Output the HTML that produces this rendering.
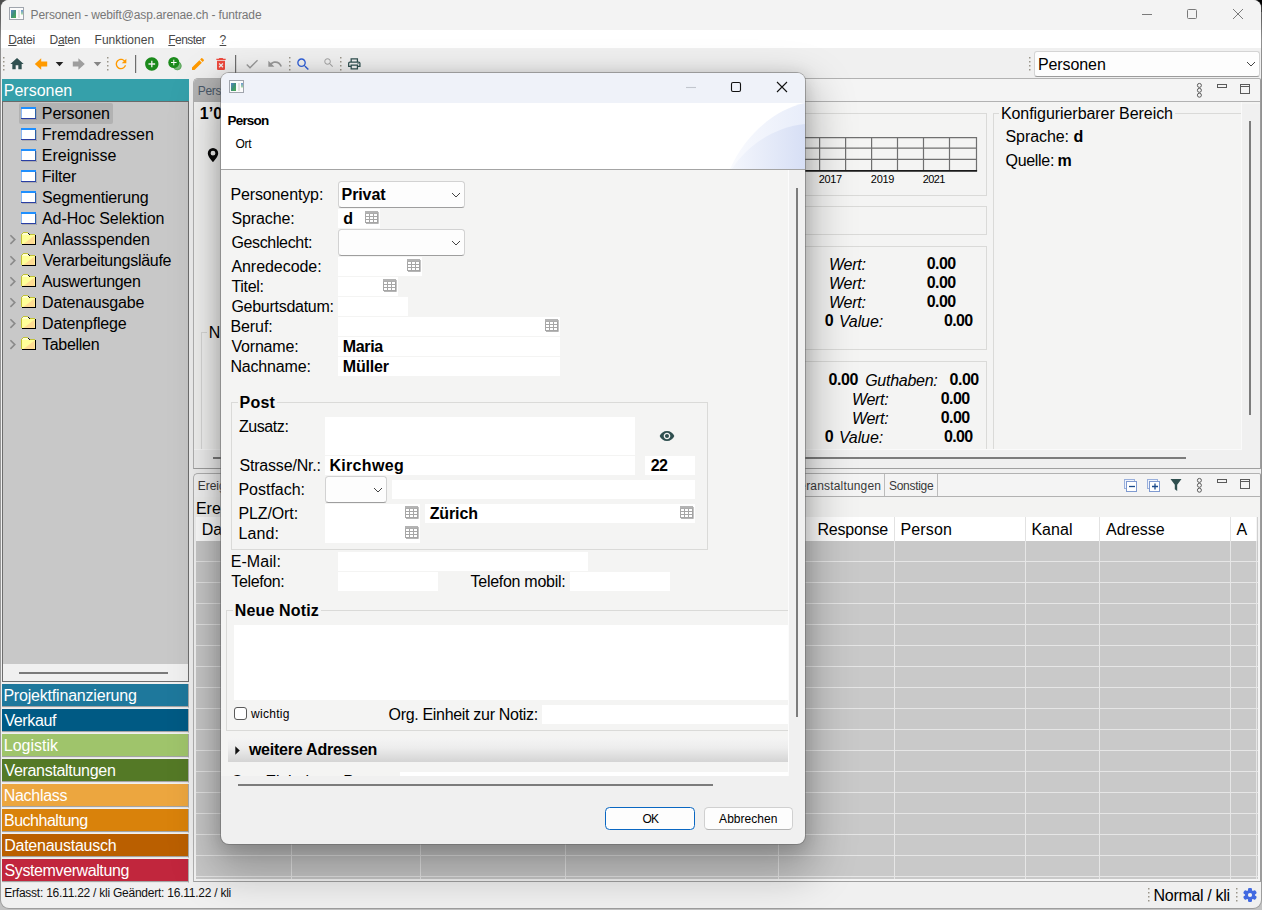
<!DOCTYPE html>
<html lang="de"><head><meta charset="utf-8"><title>Personen - webift@asp.arenae.ch - funtrade</title>
<style>
*{box-sizing:border-box;margin:0;padding:0}
html,body{width:1262px;height:910px;overflow:hidden}
body{position:relative;background:linear-gradient(#4e4e4e 0,#4e4e4e 18px,#a8a8a8 40px,#c2c2c2 100%);font-family:"Liberation Sans",Arial,sans-serif;color:#000;font-size:16px}
.abs{position:absolute}
.t{position:absolute;white-space:pre;line-height:1}
u{text-decoration:underline;text-underline-offset:1px;text-decoration-thickness:1px}
.field{position:absolute;background:#fff}
</style></head><body>
<div class="abs" style="left:1250px;top:0;width:12px;height:12px;background:#000"></div>
<div class="abs" id="win" style="left:1px;top:0;width:1260px;height:908px;background:#f0f0f0;border-radius:8px;overflow:hidden;box-shadow:0 0 0 1px rgba(120,120,120,.5)"></div>
<div class="abs" style="left:1px;top:0px;width:1260px;height:30px;background:#f3f3f3;border-radius:8px 8px 0 0"></div>
<svg class="abs" style="left:9px;top:7px" width="15" height="13" viewBox="0 0 15 13"><defs><linearGradient id="ig" x1="0" y1="0" x2="1" y2="1"><stop offset="0" stop-color="#5a84c8"/><stop offset=".5" stop-color="#3f9078"/><stop offset="1" stop-color="#4cae50"/></linearGradient><linearGradient id="ig2" x1="0" y1="0" x2="0" y2="1"><stop offset="0" stop-color="#6a96d4"/><stop offset="1" stop-color="#a8dca0"/></linearGradient></defs><rect x="0.500" y="0.500" width="14" height="12" fill="#fbfbfb" stroke="#a0a5ad"/><rect x="2" y="3" width="5" height="8" fill="url(#ig)"/><rect x="9" y="3" width="2" height="8" fill="#e2e2e2"/><rect x="12" y="3" width="2" height="4.500" fill="url(#ig2)"/></svg>
<div class="t" style="left:30.60px;top:9.09px;font-size:12px;letter-spacing:-0.130px;color:#777;">Personen - webift@asp.arenae.ch - funtrade</div>
<svg class="abs" style="left:1138px;top:5px" width="110" height="20" viewBox="0 0 110 20" fill="none" stroke="#7a7a7a" stroke-width="1"><path d="M4 9.500h10"/><rect x="49.500" y="4.500" width="9" height="9" rx="1"/><path d="M95 4l10 10M105 4l-10 10"/></svg>
<div class="abs" style="left:1px;top:30px;width:1260px;height:18px;background:#fff;"></div>
<div class="t" style="left:8.20px;top:34.09px;font-size:12px;letter-spacing:-0.262px;color:#484848;"><u>D</u>atei</div>
<div class="t" style="left:49.60px;top:34.09px;font-size:12px;letter-spacing:-0.312px;color:#484848;">D<u>a</u>ten</div>
<div class="t" style="left:94.60px;top:34.09px;font-size:12px;letter-spacing:0.011px;color:#484848;">Funktionen</div>
<div class="t" style="left:168.30px;top:34.09px;font-size:12px;letter-spacing:-0.548px;color:#484848;"><u>F</u>enster</div>
<div class="t" style="left:219.60px;top:34.09px;font-size:12px;color:#484848;"><u>?</u></div>
<svg width="0" height="0" style="position:absolute"><defs><g id="grip" fill="#9a958a"><rect x="0" y="0" width="1.500" height="1.500"/><rect x="0" y="4" width="1.500" height="1.500"/><rect x="0" y="8" width="1.500" height="1.500"/><rect x="0" y="12" width="1.500" height="1.500"/></g><g id="tbl"><rect x="0" y="0" width="13" height="12" fill="#a6a6a6"/><rect x="0" y="0" width="13" height="2.500" fill="#b4b4b4"/><path d="M1 3h3v2h-3zM5 3h3v2h-3zM9 3h3v2h-3zM1 6h3v2h-3zM5 6h3v2h-3zM9 6h3v2h-3zM1 9h3v2h-3zM5 9h3v2h-3zM9 9h3v2h-3z" fill="#fff"/><path d="M13.300 1v11.500H1" stroke="#8a8a8a" stroke-width=".8" fill="none" opacity=".8"/></g></defs></svg>
<svg class="abs" style="left:0;top:49px" width="380" height="30" viewBox="0 49 380 30">
  <g transform="translate(9,56) scale(.667)" fill="#2f4f4f"><path d="M10 20v-6h4v6h5v-8h3L12 3 2 12h3v8z"/></g>
  <path d="M34.800 64l6.400-5.800v3.300h6v5h-6v3.300z" fill="#ff9a00"/>
  <path d="M55.700 62h7.600l-3.800 4.200z" fill="#222"/>
  <path d="M84.800 64l-6.400-5.800v3.300h-5.600v5h5.600v3.300z" fill="#9e9e9e"/>
  <path d="M93.700 62h7.600l-3.800 4.200z" fill="#858585"/>
  <g transform="translate(113,56) scale(.667)" fill="#ff9a00"><path d="M17.650 6.350C16.200 4.900 14.210 4 12 4c-4.420 0-7.990 3.580-7.990 8s3.570 8 7.990 8c3.730 0 6.840-2.550 7.730-6h-2.080c-.82 2.330-3.040 4-5.650 4-3.310 0-6-2.690-6-6s2.690-6 6-6c1.660 0 3.140.69 4.220 1.780L13 11h7V4l-2.350 2.350z"/></g>
  <rect x="135" y="55" width="1.200" height="18" fill="#6e6e6e"/>
  <g transform="translate(143.800,56) scale(.667)" fill="#1b8a1b"><path d="M12 2C6.480 2 2 6.480 2 12s4.480 10 10 10 10-4.480 10-10S17.520 2 12 2zm5 11h-4v4h-2v-4H7v-2h4V7h2v4h4v2z"/></g>
  <circle cx="177.300" cy="65.900" r="4.300" fill="#7ab87a"/><circle cx="177.300" cy="65.900" r="3.800" fill="none" stroke="#4f9f4f" stroke-width=".7"/>
  <circle cx="173.800" cy="62.500" r="5.500" fill="#1b8a1b"/><path d="M171 62.500h5.600M173.800 59.700v5.600" stroke="#fff" stroke-width="1"/>
  <g transform="translate(190,56) scale(.667)" fill="#ff9a00"><path d="M3 17.250V21h3.750L17.810 9.940l-3.750-3.750L3 17.250zM20.710 7.040c.39-.39.39-1.020 0-1.410l-2.340-2.340c-.39-.39-1.020-.39-1.410 0l-1.830 1.830 3.750 3.750 1.830-1.830z"/></g>
  <g transform="translate(213,56) scale(.667)" fill="#ee4a3e"><path d="M6 19c0 1.100.9 2 2 2h8c1.100 0 2-.9 2-2V7H6v12zm2.460-7.120l1.410-1.410L12 12.590l2.120-2.120 1.410 1.410L13.410 14l2.120 2.120-1.410 1.410L12 15.410l-2.120 2.120-1.410-1.410L10.590 14l-2.130-2.120zM15.500 4l-1-1h-5l-1 1H5v2h14V4z"/></g>
  <rect x="235" y="55" width="1.200" height="18" fill="#6e6e6e"/>
  <g transform="translate(244,56) scale(.667)" fill="#9a9a9a"><path d="M9 16.170L4.830 12l-1.420 1.410L9 19 21 7l-1.410-1.410z"/></g>
  <g transform="translate(267,56) scale(.667)" fill="#9a9a9a"><path d="M12.500 8c-2.650 0-5.050.99-6.900 2.600L2 7v9h9l-3.620-3.620c1.390-1.160 3.160-1.880 5.120-1.880 3.540 0 6.550 2.310 7.600 5.500l2.370-.78C21.080 11.030 17.150 8 12.500 8z"/></g>
  <g transform="translate(295.200,56.300) scale(.667)" fill="#2f5fd8"><path d="M15.500 14h-.79l-.28-.27C15.410 12.590 16 11.110 16 9.500 16 5.910 13.090 3 9.500 3S3 5.910 3 9.500 5.910 16 9.500 16c1.610 0 3.090-.59 4.230-1.570l.27.28v.79l5 4.990L20.490 19l-4.990-5zm-6 0C7.010 14 5 11.990 5 9.500S7.010 5 9.500 5 14 7.010 14 9.500 11.990 14 9.500 14z"/></g>
  <g transform="translate(322.800,56.800) scale(.5)" fill="#a6a6a6"><path d="M15.500 14h-.79l-.28-.27C15.410 12.590 16 11.110 16 9.500 16 5.910 13.090 3 9.500 3S3 5.910 3 9.500 5.910 16 9.500 16c1.610 0 3.090-.59 4.230-1.570l.27.28v.79l5 4.990L20.490 19l-4.990-5zm-6 0C7.010 14 5 11.990 5 9.500S7.010 5 9.500 5 14 7.010 14 9.500 11.990 14 9.500 14z"/></g>
  <g transform="translate(346.800,56.400) scale(.625)" fill="#2f4f4f"><path fill-rule="evenodd" d="M19 8h-1V3H6v5H5c-1.660 0-3 1.340-3 3v6h4v4h12v-4h4v-6c0-1.660-1.340-3-3-3zM8 5h8v3H8V5zm8 14H8v-4h8v4zm2-4v-2H6v2H4v-4c0-.55.45-1 1-1h14c.55 0 1 .45 1 1v4h-2z"/><circle cx="18" cy="11.500" r="1"/></g>
</svg>

<svg class="abs" style="left:3px;top:57px" width="2" height="15"><use href="#grip"/></svg>
<svg class="abs" style="left:107px;top:57px" width="2" height="15"><use href="#grip"/></svg>
<svg class="abs" style="left:289px;top:57px" width="2" height="15"><use href="#grip"/></svg>
<svg class="abs" style="left:340px;top:57px" width="2" height="15"><use href="#grip"/></svg>
<svg class="abs" style="left:1029px;top:57px" width="2" height="15"><use href="#grip"/></svg>
<div class="abs" style="left:1034px;top:51px;width:225.500px;height:25.500px;background:#fdfdfd;border:1px solid #d4d4d4;border-bottom-color:#9c9c9c;border-radius:3px"></div>
<div class="t" style="left:1038.00px;top:56.71px;font-size:16px;letter-spacing:-0.099px;">Personen</div>
<svg class="abs" style="left:1246px;top:61px" width="10" height="7" viewBox="0 0 10 7" fill="none" stroke="#444" stroke-width="1"><path d="M1 1l4 4 4-4"/></svg>
<div class="abs" style="left:2px;top:79px;width:187px;height:23px;background:#35a0aa;border-bottom:1px solid #6a6a6a"></div>
<div class="t" style="left:3.80px;top:82.71px;font-size:16px;letter-spacing:-0.013px;color:#fff;">Personen</div>
<div class="abs" style="left:2px;top:102px;width:187px;height:580px;background:#c8c8c8;border:1px solid #6e6e6e;border-top:0"></div>
<div class="abs" style="left:3px;top:664px;width:185px;height:17px;background:#f0f0f0;"></div>
<div class="abs" style="left:19px;top:672px;width:149px;height:2px;background:#7a7a7a;"></div>
<div class="abs" style="left:19px;top:103px;width:94px;height:21px;background:#b2b2b2;border-radius:2px"></div>
<svg class="abs" style="left:21px;top:107px" width="16" height="13" viewBox="0 0 16 13" shape-rendering="crispEdges"><rect x="15" y="2" width="1" height="11" fill="#8a8a96" opacity=".45"/><rect x="1" y="12" width="15" height="1" fill="#8a8a96" opacity=".45"/><rect x="0" y="0" width="15" height="12" fill="#fff"/><rect x="0" y="0" width="15" height="2" fill="#1e8fff"/><rect x="0" y="2" width="1" height="10" fill="#8ab8f4"/><rect x="14" y="2" width="1" height="10" fill="#2a62a8"/><rect x="0" y="11" width="15" height="1" fill="#2a3fa4"/></svg>
<div class="t" style="left:41.80px;top:105.71px;font-size:16px;letter-spacing:-0.056px;">Personen</div>
<svg class="abs" style="left:21px;top:128px" width="16" height="13" viewBox="0 0 16 13" shape-rendering="crispEdges"><rect x="15" y="2" width="1" height="11" fill="#8a8a96" opacity=".45"/><rect x="1" y="12" width="15" height="1" fill="#8a8a96" opacity=".45"/><rect x="0" y="0" width="15" height="12" fill="#fff"/><rect x="0" y="0" width="15" height="2" fill="#1e8fff"/><rect x="0" y="2" width="1" height="10" fill="#8ab8f4"/><rect x="14" y="2" width="1" height="10" fill="#2a62a8"/><rect x="0" y="11" width="15" height="1" fill="#2a3fa4"/></svg>
<div class="t" style="left:41.80px;top:126.71px;font-size:16px;letter-spacing:-0.004px;">Fremdadressen</div>
<svg class="abs" style="left:21px;top:149px" width="16" height="13" viewBox="0 0 16 13" shape-rendering="crispEdges"><rect x="15" y="2" width="1" height="11" fill="#8a8a96" opacity=".45"/><rect x="1" y="12" width="15" height="1" fill="#8a8a96" opacity=".45"/><rect x="0" y="0" width="15" height="12" fill="#fff"/><rect x="0" y="0" width="15" height="2" fill="#1e8fff"/><rect x="0" y="2" width="1" height="10" fill="#8ab8f4"/><rect x="14" y="2" width="1" height="10" fill="#2a62a8"/><rect x="0" y="11" width="15" height="1" fill="#2a3fa4"/></svg>
<div class="t" style="left:41.80px;top:147.71px;font-size:16px;letter-spacing:-0.012px;">Ereignisse</div>
<svg class="abs" style="left:21px;top:170px" width="16" height="13" viewBox="0 0 16 13" shape-rendering="crispEdges"><rect x="15" y="2" width="1" height="11" fill="#8a8a96" opacity=".45"/><rect x="1" y="12" width="15" height="1" fill="#8a8a96" opacity=".45"/><rect x="0" y="0" width="15" height="12" fill="#fff"/><rect x="0" y="0" width="15" height="2" fill="#1e8fff"/><rect x="0" y="2" width="1" height="10" fill="#8ab8f4"/><rect x="14" y="2" width="1" height="10" fill="#2a62a8"/><rect x="0" y="11" width="15" height="1" fill="#2a3fa4"/></svg>
<div class="t" style="left:41.80px;top:168.71px;font-size:16px;letter-spacing:-0.225px;">Filter</div>
<svg class="abs" style="left:21px;top:191px" width="16" height="13" viewBox="0 0 16 13" shape-rendering="crispEdges"><rect x="15" y="2" width="1" height="11" fill="#8a8a96" opacity=".45"/><rect x="1" y="12" width="15" height="1" fill="#8a8a96" opacity=".45"/><rect x="0" y="0" width="15" height="12" fill="#fff"/><rect x="0" y="0" width="15" height="2" fill="#1e8fff"/><rect x="0" y="2" width="1" height="10" fill="#8ab8f4"/><rect x="14" y="2" width="1" height="10" fill="#2a62a8"/><rect x="0" y="11" width="15" height="1" fill="#2a3fa4"/></svg>
<div class="t" style="left:42.00px;top:189.71px;font-size:16px;letter-spacing:-0.160px;">Segmentierung</div>
<svg class="abs" style="left:21px;top:212px" width="16" height="13" viewBox="0 0 16 13" shape-rendering="crispEdges"><rect x="15" y="2" width="1" height="11" fill="#8a8a96" opacity=".45"/><rect x="1" y="12" width="15" height="1" fill="#8a8a96" opacity=".45"/><rect x="0" y="0" width="15" height="12" fill="#fff"/><rect x="0" y="0" width="15" height="2" fill="#1e8fff"/><rect x="0" y="2" width="1" height="10" fill="#8ab8f4"/><rect x="14" y="2" width="1" height="10" fill="#2a62a8"/><rect x="0" y="11" width="15" height="1" fill="#2a3fa4"/></svg>
<div class="t" style="left:42.00px;top:210.71px;font-size:16px;letter-spacing:-0.081px;">Ad-Hoc Selektion</div>
<svg class="abs" style="left:9px;top:234px" width="8" height="11" viewBox="0 0 8 11" fill="none" stroke="#8a8a8a" stroke-width="1.600"><path d="M1.400 1.300l4.400 4.300-4.400 4.300"/></svg>
<svg class="abs" style="left:21px;top:232px" width="16" height="14" viewBox="0 0 16 14" shape-rendering="crispEdges"><rect x="1" y="3" width="13" height="9" fill="#ffff99"/><path d="M13.500 3.500v8.500h-11z" fill="#ffc490" opacity=".6" shape-rendering="auto"/><rect x="2" y="0" width="5" height="1" fill="#c2c238"/><rect x="1" y="1" width="1" height="1" fill="#c2c238"/><rect x="2" y="1" width="5" height="1" fill="#ffffd6"/><rect x="7" y="1" width="1" height="1" fill="#111"/><rect x="0" y="2" width="1" height="10" fill="#c2c238"/><rect x="1" y="2" width="7" height="1" fill="#ffffcc"/><rect x="8" y="2" width="1" height="1" fill="#111"/><rect x="9" y="2" width="5" height="1" fill="#c2c238"/><rect x="14" y="3" width="1" height="10" fill="#000"/><rect x="1" y="12" width="14" height="1" fill="#000"/></svg>
<div class="t" style="left:42.00px;top:231.71px;font-size:16px;letter-spacing:-0.126px;">Anlassspenden</div>
<svg class="abs" style="left:9px;top:255px" width="8" height="11" viewBox="0 0 8 11" fill="none" stroke="#8a8a8a" stroke-width="1.600"><path d="M1.400 1.300l4.400 4.300-4.400 4.300"/></svg>
<svg class="abs" style="left:21px;top:253px" width="16" height="14" viewBox="0 0 16 14" shape-rendering="crispEdges"><rect x="1" y="3" width="13" height="9" fill="#ffff99"/><path d="M13.500 3.500v8.500h-11z" fill="#ffc490" opacity=".6" shape-rendering="auto"/><rect x="2" y="0" width="5" height="1" fill="#c2c238"/><rect x="1" y="1" width="1" height="1" fill="#c2c238"/><rect x="2" y="1" width="5" height="1" fill="#ffffd6"/><rect x="7" y="1" width="1" height="1" fill="#111"/><rect x="0" y="2" width="1" height="10" fill="#c2c238"/><rect x="1" y="2" width="7" height="1" fill="#ffffcc"/><rect x="8" y="2" width="1" height="1" fill="#111"/><rect x="9" y="2" width="5" height="1" fill="#c2c238"/><rect x="14" y="3" width="1" height="10" fill="#000"/><rect x="1" y="12" width="14" height="1" fill="#000"/></svg>
<div class="t" style="left:42.80px;top:252.71px;font-size:16px;letter-spacing:-0.278px;">Verarbeitungsläufe</div>
<svg class="abs" style="left:9px;top:276px" width="8" height="11" viewBox="0 0 8 11" fill="none" stroke="#8a8a8a" stroke-width="1.600"><path d="M1.400 1.300l4.400 4.300-4.400 4.300"/></svg>
<svg class="abs" style="left:21px;top:274px" width="16" height="14" viewBox="0 0 16 14" shape-rendering="crispEdges"><rect x="1" y="3" width="13" height="9" fill="#ffff99"/><path d="M13.500 3.500v8.500h-11z" fill="#ffc490" opacity=".6" shape-rendering="auto"/><rect x="2" y="0" width="5" height="1" fill="#c2c238"/><rect x="1" y="1" width="1" height="1" fill="#c2c238"/><rect x="2" y="1" width="5" height="1" fill="#ffffd6"/><rect x="7" y="1" width="1" height="1" fill="#111"/><rect x="0" y="2" width="1" height="10" fill="#c2c238"/><rect x="1" y="2" width="7" height="1" fill="#ffffcc"/><rect x="8" y="2" width="1" height="1" fill="#111"/><rect x="9" y="2" width="5" height="1" fill="#c2c238"/><rect x="14" y="3" width="1" height="10" fill="#000"/><rect x="1" y="12" width="14" height="1" fill="#000"/></svg>
<div class="t" style="left:42.00px;top:273.71px;font-size:16px;letter-spacing:-0.317px;">Auswertungen</div>
<svg class="abs" style="left:9px;top:297px" width="8" height="11" viewBox="0 0 8 11" fill="none" stroke="#8a8a8a" stroke-width="1.600"><path d="M1.400 1.300l4.400 4.300-4.400 4.300"/></svg>
<svg class="abs" style="left:21px;top:295px" width="16" height="14" viewBox="0 0 16 14" shape-rendering="crispEdges"><rect x="1" y="3" width="13" height="9" fill="#ffff99"/><path d="M13.500 3.500v8.500h-11z" fill="#ffc490" opacity=".6" shape-rendering="auto"/><rect x="2" y="0" width="5" height="1" fill="#c2c238"/><rect x="1" y="1" width="1" height="1" fill="#c2c238"/><rect x="2" y="1" width="5" height="1" fill="#ffffd6"/><rect x="7" y="1" width="1" height="1" fill="#111"/><rect x="0" y="2" width="1" height="10" fill="#c2c238"/><rect x="1" y="2" width="7" height="1" fill="#ffffcc"/><rect x="8" y="2" width="1" height="1" fill="#111"/><rect x="9" y="2" width="5" height="1" fill="#c2c238"/><rect x="14" y="3" width="1" height="10" fill="#000"/><rect x="1" y="12" width="14" height="1" fill="#000"/></svg>
<div class="t" style="left:42.10px;top:294.71px;font-size:16px;letter-spacing:-0.162px;">Datenausgabe</div>
<svg class="abs" style="left:9px;top:318px" width="8" height="11" viewBox="0 0 8 11" fill="none" stroke="#8a8a8a" stroke-width="1.600"><path d="M1.400 1.300l4.400 4.300-4.400 4.300"/></svg>
<svg class="abs" style="left:21px;top:316px" width="16" height="14" viewBox="0 0 16 14" shape-rendering="crispEdges"><rect x="1" y="3" width="13" height="9" fill="#ffff99"/><path d="M13.500 3.500v8.500h-11z" fill="#ffc490" opacity=".6" shape-rendering="auto"/><rect x="2" y="0" width="5" height="1" fill="#c2c238"/><rect x="1" y="1" width="1" height="1" fill="#c2c238"/><rect x="2" y="1" width="5" height="1" fill="#ffffd6"/><rect x="7" y="1" width="1" height="1" fill="#111"/><rect x="0" y="2" width="1" height="10" fill="#c2c238"/><rect x="1" y="2" width="7" height="1" fill="#ffffcc"/><rect x="8" y="2" width="1" height="1" fill="#111"/><rect x="9" y="2" width="5" height="1" fill="#c2c238"/><rect x="14" y="3" width="1" height="10" fill="#000"/><rect x="1" y="12" width="14" height="1" fill="#000"/></svg>
<div class="t" style="left:42.10px;top:315.71px;font-size:16px;letter-spacing:-0.169px;">Datenpflege</div>
<svg class="abs" style="left:9px;top:339px" width="8" height="11" viewBox="0 0 8 11" fill="none" stroke="#8a8a8a" stroke-width="1.600"><path d="M1.400 1.300l4.400 4.300-4.400 4.300"/></svg>
<svg class="abs" style="left:21px;top:337px" width="16" height="14" viewBox="0 0 16 14" shape-rendering="crispEdges"><rect x="1" y="3" width="13" height="9" fill="#ffff99"/><path d="M13.500 3.500v8.500h-11z" fill="#ffc490" opacity=".6" shape-rendering="auto"/><rect x="2" y="0" width="5" height="1" fill="#c2c238"/><rect x="1" y="1" width="1" height="1" fill="#c2c238"/><rect x="2" y="1" width="5" height="1" fill="#ffffd6"/><rect x="7" y="1" width="1" height="1" fill="#111"/><rect x="0" y="2" width="1" height="10" fill="#c2c238"/><rect x="1" y="2" width="7" height="1" fill="#ffffcc"/><rect x="8" y="2" width="1" height="1" fill="#111"/><rect x="9" y="2" width="5" height="1" fill="#c2c238"/><rect x="14" y="3" width="1" height="10" fill="#000"/><rect x="1" y="12" width="14" height="1" fill="#000"/></svg>
<div class="t" style="left:42.00px;top:336.71px;font-size:16px;letter-spacing:-0.286px;">Tabellen</div>
<div class="abs" style="left:2px;top:684px;width:187px;height:24px;background:#1e789c;border-bottom:1px solid #e6e6e6;border-right:1px solid #aaa;box-shadow:inset 0 -1px 0 #a4a4a4;"></div>
<div class="t" style="left:3.40px;top:687.71px;font-size:16px;letter-spacing:-0.193px;color:#fff;">Projektfinanzierung</div>
<div class="abs" style="left:2px;top:709px;width:187px;height:24px;background:#005a84;border-bottom:1px solid #e6e6e6;border-right:1px solid #aaa;box-shadow:inset 0 -1px 0 #a4a4a4;"></div>
<div class="t" style="left:4.40px;top:712.71px;font-size:16px;letter-spacing:-0.369px;color:#fff;">Verkauf</div>
<div class="abs" style="left:2px;top:734px;width:187px;height:24px;background:#9fc46b;border-bottom:1px solid #e6e6e6;border-right:1px solid #aaa;box-shadow:inset 0 -1px 0 #a4a4a4;"></div>
<div class="t" style="left:3.80px;top:737.71px;font-size:16px;letter-spacing:-0.007px;color:#fff;">Logistik</div>
<div class="abs" style="left:2px;top:759px;width:187px;height:24px;background:#547926;border-bottom:1px solid #e6e6e6;border-right:1px solid #aaa;box-shadow:inset 0 -1px 0 #a4a4a4;"></div>
<div class="t" style="left:4.40px;top:762.71px;font-size:16px;letter-spacing:-0.304px;color:#fff;">Veranstaltungen</div>
<div class="abs" style="left:2px;top:784px;width:187px;height:24px;background:#eca63f;border-bottom:1px solid #e6e6e6;border-right:1px solid #aaa;box-shadow:inset 0 -1px 0 #a4a4a4;"></div>
<div class="t" style="left:3.80px;top:787.71px;font-size:16px;letter-spacing:-0.315px;color:#fff;">Nachlass</div>
<div class="abs" style="left:2px;top:809px;width:187px;height:24px;background:#d9820b;border-bottom:1px solid #e6e6e6;border-right:1px solid #aaa;box-shadow:inset 0 -1px 0 #a4a4a4;"></div>
<div class="t" style="left:4.00px;top:812.71px;font-size:16px;letter-spacing:-0.486px;color:#fff;">Buchhaltung</div>
<div class="abs" style="left:2px;top:834px;width:187px;height:24px;background:#ba5f00;border-bottom:1px solid #e6e6e6;border-right:1px solid #aaa;box-shadow:inset 0 -1px 0 #a4a4a4;"></div>
<div class="t" style="left:4.20px;top:837.71px;font-size:16px;letter-spacing:-0.249px;color:#fff;">Datenaustausch</div>
<div class="abs" style="left:2px;top:859px;width:187px;height:24px;background:#c1263d;border-bottom:1px solid #e6e6e6;border-right:1px solid #aaa;box-shadow:inset 0 -1px 0 #a4a4a4;"></div>
<div class="t" style="left:4.60px;top:862.71px;font-size:16px;letter-spacing:-0.401px;color:#fff;">Systemverwaltung</div>
<div class="abs" style="left:193px;top:78px;width:1068px;height:391px;background:#f4f4f4;border:1px solid #b2b2b2;border-right-color:#9c9c9c;border-bottom-color:#a0a0a0;border-radius:5px 2px 0 0"></div>
<div class="abs" style="left:194px;top:79px;width:42px;height:22px;background:#b4b4b4;border-radius:4px 0 0 0"></div>
<div class="t" style="left:197.80px;top:85.09px;font-size:12px;letter-spacing:-0.300px;color:#4a5a6a;">Perso</div>
<div class="abs" style="left:194px;top:101px;width:1066px;height:1px;background:#b2b2b2;"></div>
<div class="abs" style="left:194px;top:102px;width:1066px;height:2px;background:#f4f4f3;"></div>
<div class="abs" style="left:1241px;top:104px;width:19px;height:345px;background:#f0f0f0;"></div>
<div class="abs" style="left:194px;top:449px;width:1066px;height:19px;background:#f0f0f0;"></div>
<div class="abs" style="left:194px;top:102px;width:1048px;height:348px;background:#fafafa;"></div>
<div class="abs" style="left:194px;top:102px;width:1047px;height:347px;background:#f4f4f3;"></div>
<div class="t" style="left:199.80px;top:105.71px;font-size:16px;font-weight:bold;">1’0</div>
<svg class="abs" style="left:206px;top:147px" width="14" height="16" viewBox="206 147 14 16"><path fill="#0a0a0a" fill-rule="evenodd" d="M213 148a5.200 5.200 0 0 0-5.200 5.200c0 3.600 5.200 8.900 5.200 8.900s5.200-5.300 5.200-8.900A5.200 5.200 0 0 0 213 148zm0 2.800a2.400 2.400 0 1 1 0 4.800a2.400 2.400 0 0 1 0-4.800z"/></svg>
<div class="abs" style="left:201px;top:332px;width:400px;height:117px;border:1px solid #dadad8;border-bottom:0"></div>
<div class="t" style="left:208.80px;top:324.71px;font-size:16px;background:#f4f4f3;padding:0 2px 0 2px;margin-left:-2px;">N</div>
<div class="abs" style="left:560px;top:113px;width:427px;height:83px;border:1px solid #dadad8;"></div>
<div class="abs" style="left:560px;top:206px;width:427px;height:29px;border:1px solid #dadad8;"></div>
<div class="abs" style="left:560px;top:246px;width:427px;height:104px;border:1px solid #dadad8;"></div>
<div class="abs" style="left:560px;top:361px;width:427px;height:88px;border:1px solid #dadad8;border-bottom:0"></div>
<svg class="abs" style="left:780px;top:136px" width="200" height="38" viewBox="0 0 200 38" fill="none" stroke="#707070" stroke-width="1.200"><path d="M0 1.600h197M0 12.200h197M0 23.400h197M13.600 1v34M39.600 1v34M65.600 1v34M91.600 1v34M117.500 1v34M143.500 1v34M169.500 1v34M196.500 1v34"/><path d="M0 34.900h197.100" stroke="#1a1a1a" stroke-width="1.600"/></svg>
<div class="t" style="left:818.70px;top:173.94px;font-size:11px;letter-spacing:-0.351px;">2017</div>
<div class="t" style="left:870.80px;top:173.94px;font-size:11px;letter-spacing:-0.284px;">2019</div>
<div class="t" style="left:922.80px;top:173.94px;font-size:11px;letter-spacing:-0.618px;">2021</div>
<div class="t" style="left:829.00px;top:256.71px;font-size:16px;letter-spacing:-0.246px;font-style:italic;">Wert:</div>
<div class="t" style="left:926.70px;top:255.71px;font-size:16px;letter-spacing:-0.547px;font-weight:bold;">0.00</div>
<div class="t" style="left:829.00px;top:275.71px;font-size:16px;letter-spacing:-0.246px;font-style:italic;">Wert:</div>
<div class="t" style="left:926.70px;top:274.71px;font-size:16px;letter-spacing:-0.547px;font-weight:bold;">0.00</div>
<div class="t" style="left:829.00px;top:294.71px;font-size:16px;letter-spacing:-0.246px;font-style:italic;">Wert:</div>
<div class="t" style="left:926.70px;top:293.71px;font-size:16px;letter-spacing:-0.547px;font-weight:bold;">0.00</div>
<div class="t" style="left:824.80px;top:312.71px;font-size:16px;font-weight:bold;">0</div>
<div class="t" style="left:838.90px;top:313.71px;font-size:16px;letter-spacing:-0.106px;font-style:italic;">Value:</div>
<div class="t" style="left:944.10px;top:312.71px;font-size:16px;letter-spacing:-0.681px;font-weight:bold;">0.00</div>
<div class="t" style="left:828.50px;top:371.71px;font-size:16px;letter-spacing:-0.381px;font-weight:bold;">0.00</div>
<div class="t" style="left:865.20px;top:372.71px;font-size:16px;letter-spacing:-0.273px;font-style:italic;">Guthaben:</div>
<div class="t" style="left:949.50px;top:371.71px;font-size:16px;letter-spacing:-0.481px;font-weight:bold;">0.00</div>
<div class="t" style="left:852.00px;top:391.71px;font-size:16px;letter-spacing:-0.321px;font-style:italic;">Wert:</div>
<div class="t" style="left:940.80px;top:390.71px;font-size:16px;letter-spacing:-0.581px;font-weight:bold;">0.00</div>
<div class="t" style="left:852.00px;top:410.71px;font-size:16px;letter-spacing:-0.321px;font-style:italic;">Wert:</div>
<div class="t" style="left:940.80px;top:409.71px;font-size:16px;letter-spacing:-0.581px;font-weight:bold;">0.00</div>
<div class="t" style="left:824.80px;top:428.71px;font-size:16px;font-weight:bold;">0</div>
<div class="t" style="left:838.90px;top:429.71px;font-size:16px;letter-spacing:-0.106px;font-style:italic;">Value:</div>
<div class="t" style="left:944.10px;top:428.71px;font-size:16px;letter-spacing:-0.681px;font-weight:bold;">0.00</div>
<div class="abs" style="left:993px;top:113px;width:248px;height:336px;border:1px solid #dadad8;border-right:0;border-bottom:0"></div>
<div class="t" style="left:1000.90px;top:105.71px;font-size:16px;letter-spacing:-0.058px;background:#f4f4f3;padding:0 2px;margin-left:-2px;">Konfigurierbarer Bereich</div>
<div class="t" style="left:1005.50px;top:128.71px;font-size:16px;letter-spacing:-0.071px;">Sprache:</div>
<div class="t" style="left:1073.60px;top:128.71px;font-size:16px;font-weight:bold;">d</div>
<div class="t" style="left:1005.50px;top:152.71px;font-size:16px;letter-spacing:-0.308px;">Quelle:</div>
<div class="t" style="left:1057.50px;top:152.71px;font-size:16px;font-weight:bold;">m</div>
<div class="abs" style="left:1249px;top:121px;width:2px;height:294px;background:#7c7c7c;"></div>
<div class="abs" style="left:213px;top:457px;width:973px;height:2px;background:#7c7c7c;"></div>
<svg class="abs" style="left:1194px;top:82px" width="60" height="16" viewBox="0 0 60 16" fill="none" stroke="#5a5a5a" stroke-width="1"><circle cx="5.400" cy="3.400" r="2"/><circle cx="5.400" cy="8.300" r="2"/><circle cx="5.400" cy="13.200" r="2"/><rect x="23.500" y="2.500" width="9" height="3"/><rect x="46.500" y="2.500" width="9" height="9"/><path d="M46.500 4.500h9"/></svg>
<div class="abs" style="left:193px;top:473px;width:1068px;height:409px;background:#f4f4f4;border:1px solid #b2b2b2;border-right-color:#9c9c9c;border-bottom-color:#a0a0a0;border-radius:5px 2px 0 0"></div>
<div class="abs" style="left:230px;top:496px;width:1030px;height:1px;background:#b2b2b2;"></div>
<div class="abs" style="left:194px;top:497px;width:1066px;height:20px;background:#f3f3f2;"></div>
<div class="t" style="left:197.70px;top:480.09px;font-size:12px;color:#3a3a3a;">Ereig</div>
<div class="t" style="left:799.30px;top:480.09px;font-size:12px;letter-spacing:0.175px;color:#3a3a3a;">eranstaltungen</div>
<div class="abs" style="left:884px;top:474px;width:1px;height:22px;background:#bcbcbc;"></div>
<div class="abs" style="left:937px;top:474px;width:1px;height:22px;background:#bcbcbc;"></div>
<div class="t" style="left:889.00px;top:480.09px;font-size:12px;letter-spacing:-0.304px;color:#3a3a3a;">Sonstige</div>
<svg class="abs" style="left:1122px;top:477px" width="136" height="18" viewBox="0 0 136 18" fill="none" stroke-width="1"><g stroke="#9ab0dc" fill="#f0f4fc"><rect x="2.500" y="2.500" width="10" height="9"/><rect x="4.500" y="4.500" width="10" height="10" fill="#fff" stroke="#7f9ad0"/></g><path d="M7 9.500h6" stroke="#1a4a8a" stroke-width="1.300"/><g stroke="#9ab0dc" fill="#f0f4fc"><rect x="25.500" y="2.500" width="10" height="9"/><rect x="27.500" y="4.500" width="10" height="10" fill="#fff" stroke="#7f9ad0"/></g><path d="M30 9.500h6M33 6.500v6" stroke="#1a4a8a" stroke-width="1.300"/><path d="M48.500 2h11l-4.300 5.700v6.300l-2.400-1.800v-4.500z" fill="#2f4f4f" stroke="none"/><g stroke="#5a5a5a"><circle cx="77.400" cy="3.400" r="2"/><circle cx="77.400" cy="8.300" r="2"/><circle cx="77.400" cy="13.200" r="2"/><rect x="95.500" y="2.500" width="9" height="3"/><rect x="118.500" y="2.500" width="9" height="9"/><path d="M118.500 4.500h9"/></g></svg>
<div class="t" style="left:195.90px;top:500.71px;font-size:16px;">Ere</div>
<div class="abs" style="left:196px;top:517px;width:1060px;height:24px;background:#fff;"></div>
<div class="abs" style="left:196px;top:541px;width:1062px;height:338px;background:#c9c9c9;"></div>
<div class="abs" style="left:1257px;top:517px;width:1px;height:24px;background:#cfcfcf;"></div>
<svg class="abs" style="left:196px;top:541px" width="1062" height="338" viewBox="0 0 1062 338" fill="none" stroke="#e6e6e6"><path d="M0 20.5h1062 M0 41.5h1062 M0 62.5h1062 M0 83.5h1062 M0 104.5h1062 M0 125.5h1062 M0 146.5h1062 M0 167.5h1062 M0 188.5h1062 M0 209.5h1062 M0 230.5h1062 M0 251.5h1062 M0 272.5h1062 M0 293.5h1062 M0 314.5h1062 M0 335.5h1062 M95.5 0v338 M224.5 0v338 M369.5 0v338 M582.5 0v338 M698.5 0v338 M829.5 0v338 M903.5 0v338 M1034.5 0v338 M1060.5 0v338"/></svg>
<svg class="abs" style="left:196px;top:517px" width="1062" height="24" viewBox="0 0 1062 24" fill="none" stroke="#e2e2e2"><path d="M95.5 0v24 M224.5 0v24 M369.5 0v24 M582.5 0v24 M698.5 0v24 M829.5 0v24 M903.5 0v24 M1034.5 0v24"/></svg>
<div class="t" style="left:201.80px;top:521.71px;font-size:16px;">Da</div>
<div class="t" style="left:817.50px;top:521.71px;font-size:16px;letter-spacing:-0.207px;">Response</div>
<div class="t" style="left:900.40px;top:521.71px;font-size:16px;letter-spacing:0.161px;">Person</div>
<div class="t" style="left:1031.40px;top:521.71px;font-size:16px;letter-spacing:0.058px;">Kanal</div>
<div class="t" style="left:1106.00px;top:521.71px;font-size:16px;">Adresse</div>
<div class="t" style="left:1236.50px;top:521.71px;font-size:16px;">A</div>
<div class="t" style="left:4.30px;top:887.09px;font-size:12px;letter-spacing:-0.242px;color:#111;">Erfasst: 16.11.22 / kli Geändert: 16.11.22 / kli</div>
<svg class="abs" style="left:1148px;top:888px" width="2" height="15"><use href="#grip"/></svg>
<svg class="abs" style="left:1235.5px;top:888px" width="2" height="15"><use href="#grip"/></svg>
<div class="t" style="left:1153.60px;top:887.71px;font-size:16px;letter-spacing:-0.332px;">Normal / kli</div>
<svg class="abs" style="left:1242px;top:887px" width="16" height="16" viewBox="-8 -8 16 16"><g fill="#4169e1"><circle r="5"/><rect x="-2" y="-7" width="4" height="5" rx="1.300" transform="rotate(0)"/><rect x="-2" y="-7" width="4" height="5" rx="1.300" transform="rotate(60)"/><rect x="-2" y="-7" width="4" height="5" rx="1.300" transform="rotate(120)"/><rect x="-2" y="-7" width="4" height="5" rx="1.300" transform="rotate(180)"/><rect x="-2" y="-7" width="4" height="5" rx="1.300" transform="rotate(240)"/><rect x="-2" y="-7" width="4" height="5" rx="1.300" transform="rotate(300)"/></g><circle r="2.100" fill="#f2f2f2"/></svg>
<div class="abs" id="dlg" style="left:221px;top:73px;width:584px;height:771px;border-radius:8px;background:#f0f0f0;box-shadow:0 0 0 1px rgba(100,100,100,.5),0 20px 44px 8px rgba(0,0,0,.27),0 3px 16px 2px rgba(0,0,0,.13);overflow:hidden">
<div class="abs" style="left:0;top:0;width:584px;height:30px;background:#eff2f9"></div>
<div class="abs" style="left:0;top:30px;width:584px;height:66px;background:#fff"></div>
<svg class="abs" style="left:404px;top:30px" width="180" height="66" viewBox="0 0 180 66"><defs><linearGradient id="sw1" gradientUnits="userSpaceOnUse" x1="100" x2="180" y1="0" y2="0"><stop offset="0" stop-color="#fafbfe"/><stop offset="1" stop-color="#e8edfa"/></linearGradient><linearGradient id="sw2" gradientUnits="userSpaceOnUse" x1="100" x2="180" y1="0" y2="0"><stop offset="0" stop-color="#f6f8fd"/><stop offset="1" stop-color="#d7dff5"/></linearGradient></defs><path d="M180 0C150 6 120 32 105 66H180z" fill="url(#sw1)"/><path d="M180 21C150 24 122 42 107 66H180z" fill="url(#sw2)"/></svg>
<div class="abs" style="left:0;top:95.500px;width:584px;height:1.500px;background:#a4a4a4"></div>
<div class="abs" style="left:0;top:97px;width:567px;height:606px;background:#f4f4f3"></div>
<div class="abs" style="left:567px;top:97px;width:1px;height:606px;background:#fbfbfb"></div>
</div>
<svg class="abs" style="left:229px;top:80px" width="15" height="13" viewBox="0 0 15 13"><rect x="0.500" y="0.500" width="14" height="12" fill="#fbfbfb" stroke="#a0a5ad"/><rect x="2" y="3" width="5" height="8" fill="url(#ig)"/><rect x="9" y="3" width="2" height="8" fill="#e2e2e2"/><rect x="12" y="3" width="2" height="4.500" fill="url(#ig2)"/></svg>
<svg class="abs" style="left:680px;top:78px" width="115" height="20" viewBox="0 0 115 20" fill="none" stroke="#111" stroke-width="1.100"><path d="M6 9.500h10" stroke="#c2c6ce"/><rect x="51.500" y="4.500" width="9" height="9" rx="1.500"/><path d="M97 4l10 10M107 4l-10 10"/></svg>
<div class="t" style="left:227.50px;top:113.82px;font-size:13.5px;letter-spacing:-0.800px;font-weight:bold;">Person</div>
<div class="t" style="left:235.40px;top:138.09px;font-size:12px;letter-spacing:-0.265px;">Ort</div>
<div class="t" style="left:230.40px;top:186.71px;font-size:16px;letter-spacing:-0.121px;">Personentyp:</div>
<div class="t" style="left:231.40px;top:210.71px;font-size:16px;letter-spacing:-0.099px;">Sprache:</div>
<div class="t" style="left:231.40px;top:234.71px;font-size:16px;letter-spacing:-0.344px;">Geschlecht:</div>
<div class="t" style="left:231.40px;top:258.71px;font-size:16px;letter-spacing:-0.049px;">Anredecode:</div>
<div class="t" style="left:231.40px;top:278.71px;font-size:16px;letter-spacing:-0.307px;">Titel:</div>
<div class="t" style="left:231.40px;top:298.71px;font-size:16px;letter-spacing:-0.274px;">Geburtsdatum:</div>
<div class="t" style="left:230.40px;top:318.71px;font-size:16px;letter-spacing:-0.068px;">Beruf:</div>
<div class="t" style="left:231.40px;top:338.71px;font-size:16px;letter-spacing:-0.177px;">Vorname:</div>
<div class="t" style="left:230.40px;top:358.71px;font-size:16px;letter-spacing:-0.172px;">Nachname:</div>
<div class="abs" style="left:338px;top:181px;width:127px;height:27px;background:#fdfdfd;border:1px solid #d2d2d2;border-bottom-color:#9e9e9e;border-radius:3.500px"></div>
<svg class="abs" style="left:451px;top:191.5px" width="10" height="7" viewBox="0 0 10 7" fill="none" stroke="#444" stroke-width="1"><path d="M1 1l4 4 4-4"/></svg>
<div class="t" style="left:341.60px;top:186.71px;font-size:16px;letter-spacing:-0.108px;font-weight:bold;">Privat</div>
<div class="abs" style="left:338px;top:208.5px;width:42px;height:19.5px;background:#fff;"></div>
<div class="t" style="left:343.30px;top:210.71px;font-size:16px;font-weight:bold;">d</div>
<svg class="abs" style="left:365px;top:211px" width="14" height="13"><use href="#tbl"/></svg>
<div class="abs" style="left:338px;top:229px;width:127px;height:27px;background:#fdfdfd;border:1px solid #d2d2d2;border-bottom-color:#9e9e9e;border-radius:3.500px"></div>
<svg class="abs" style="left:451px;top:239.5px" width="10" height="7" viewBox="0 0 10 7" fill="none" stroke="#444" stroke-width="1"><path d="M1 1l4 4 4-4"/></svg>
<div class="abs" style="left:338px;top:256.5px;width:84px;height:19.5px;background:#fff;"></div>
<svg class="abs" style="left:407px;top:259px" width="14" height="13"><use href="#tbl"/></svg>
<div class="abs" style="left:338px;top:276.5px;width:60px;height:19.5px;background:#fff;"></div>
<svg class="abs" style="left:383px;top:279px" width="14" height="13"><use href="#tbl"/></svg>
<div class="abs" style="left:338px;top:296.5px;width:70px;height:19.5px;background:#fff;"></div>
<div class="abs" style="left:338px;top:316.5px;width:222px;height:19.5px;background:#fff;"></div>
<svg class="abs" style="left:545px;top:319px" width="14" height="13"><use href="#tbl"/></svg>
<div class="abs" style="left:338px;top:336.5px;width:222px;height:19.5px;background:#fff;"></div>
<div class="t" style="left:342.80px;top:338.71px;font-size:16px;letter-spacing:-0.375px;font-weight:bold;">Maria</div>
<div class="abs" style="left:338px;top:356.5px;width:222px;height:19.5px;background:#fff;"></div>
<div class="t" style="left:342.80px;top:358.71px;font-size:16px;letter-spacing:-0.178px;font-weight:bold;">Müller</div>
<div class="abs" style="left:231px;top:402px;width:477px;height:148px;border:1px solid #dadad8;"></div>
<div class="t" style="left:239.50px;top:394.71px;font-size:16px;letter-spacing:0.252px;font-weight:bold;background:#f4f4f3;padding:0 2px;margin-left:-2px;">Post</div>
<div class="t" style="left:239.00px;top:418.71px;font-size:16px;letter-spacing:-0.436px;">Zusatz:</div>
<div class="abs" style="left:325px;top:417px;width:310px;height:38px;background:#fff;"></div>
<svg class="abs" style="left:659px;top:428px" width="16" height="16" viewBox="0 0 24 24"><path fill="#2f4f4f" d="M12 4.500C7 4.500 2.730 7.610 1 12c1.730 4.390 6 7.500 11 7.500s9.270-3.110 11-7.500c-1.730-4.390-6-7.500-11-7.500zM12 17c-2.760 0-5-2.240-5-5s2.240-5 5-5 5 2.240 5 5-2.240 5-5 5zm0-8c-1.660 0-3 1.340-3 3s1.340 3 3 3 3-1.340 3-3-1.340-3-3-3z"/></svg>
<div class="t" style="left:239.40px;top:457.71px;font-size:16px;letter-spacing:-0.176px;">Strasse/Nr.:</div>
<div class="abs" style="left:325px;top:456px;width:310px;height:19px;background:#fff;"></div>
<div class="t" style="left:329.40px;top:457.71px;font-size:16px;letter-spacing:0.323px;font-weight:bold;">Kirchweg</div>
<div class="abs" style="left:645px;top:456px;width:50px;height:19px;background:#fff;"></div>
<div class="t" style="left:650.80px;top:457.71px;font-size:16px;letter-spacing:-0.800px;font-weight:bold;">22</div>
<div class="t" style="left:238.40px;top:481.71px;font-size:16px;letter-spacing:-0.007px;">Postfach:</div>
<div class="abs" style="left:325px;top:476px;width:62px;height:27px;background:#fdfdfd;border:1px solid #d2d2d2;border-bottom-color:#9e9e9e;border-radius:3.500px"></div>
<svg class="abs" style="left:373px;top:486.5px" width="10" height="7" viewBox="0 0 10 7" fill="none" stroke="#444" stroke-width="1"><path d="M1 1l4 4 4-4"/></svg>
<div class="abs" style="left:392px;top:480px;width:303px;height:18.5px;background:#fff;"></div>
<div class="t" style="left:238.40px;top:505.71px;font-size:16px;letter-spacing:-0.101px;">PLZ/Ort:</div>
<div class="abs" style="left:325px;top:503.5px;width:95px;height:19.5px;background:#fff;"></div>
<svg class="abs" style="left:405px;top:506px" width="14" height="13"><use href="#tbl"/></svg>
<div class="abs" style="left:425px;top:503.5px;width:270px;height:19.5px;background:#fff;"></div>
<div class="t" style="left:429.70px;top:505.71px;font-size:16px;letter-spacing:-0.123px;font-weight:bold;">Zürich</div>
<svg class="abs" style="left:680px;top:506px" width="14" height="13"><use href="#tbl"/></svg>
<div class="t" style="left:238.40px;top:525.71px;font-size:16px;letter-spacing:0.102px;">Land:</div>
<div class="abs" style="left:325px;top:523px;width:95px;height:20px;background:#fff;"></div>
<svg class="abs" style="left:405px;top:526px" width="14" height="13"><use href="#tbl"/></svg>
<div class="t" style="left:230.70px;top:553.71px;font-size:16px;letter-spacing:0.061px;">E-Mail:</div>
<div class="abs" style="left:338px;top:552px;width:250px;height:19px;background:#fff;"></div>
<div class="t" style="left:231.30px;top:573.71px;font-size:16px;letter-spacing:-0.371px;">Telefon:</div>
<div class="abs" style="left:338px;top:572px;width:100px;height:19px;background:#fff;"></div>
<div class="t" style="left:470.60px;top:573.71px;font-size:16px;letter-spacing:-0.283px;">Telefon mobil:</div>
<div class="abs" style="left:570px;top:572px;width:100px;height:19px;background:#fff;"></div>
<div class="abs" style="left:226px;top:610px;width:571px;height:121px;border:1px solid #dadad8;border-right:0"></div>
<div class="t" style="left:234.80px;top:602.71px;font-size:16px;letter-spacing:0.148px;font-weight:bold;background:#f4f4f3;padding:0 2px;margin-left:-2px;">Neue Notiz</div>
<div class="abs" style="left:234px;top:625px;width:554px;height:75px;background:#fff;"></div>
<div class="abs" style="left:234px;top:707px;width:13px;height:13px;background:#fff;border:1px solid #5a5a5a;border-radius:3px"></div>
<div class="t" style="left:251.00px;top:708.09px;font-size:12px;letter-spacing:0.299px;">wichtig</div>
<div class="t" style="left:388.50px;top:706.71px;font-size:16px;letter-spacing:-0.312px;">Org. Einheit zur Notiz:</div>
<div class="abs" style="left:542px;top:705px;width:246px;height:18.5px;background:#fff;"></div>
<div class="abs" style="left:228px;top:738px;width:560px;height:24px;background:linear-gradient(#f4f4f4 0%,#ededed 40%,#d4d4d4 100%)"></div>
<svg class="abs" style="left:235px;top:746px" width="6" height="9" viewBox="0 0 6 9"><path d="M0.300 0.300l4.500 4.200-4.500 4.200z" fill="#111"/></svg>
<div class="t" style="left:248.90px;top:741.71px;font-size:16px;letter-spacing:-0.229px;font-weight:bold;">weitere Adressen</div>
<div class="abs" style="left:222px;top:766px;width:566px;height:10.300px;overflow:hidden"><div class="field" style="left:178px;top:6.200px;width:388px;height:20px"></div><div class="t" style="left:9px;top:7.700px;font-size:16px;letter-spacing:-0.2px">Org. Einheit zur Person:</div></div>
<div class="abs" style="left:789px;top:170px;width:16px;height:606px;background:#f0f0f0;"></div>
<div class="abs" style="left:788px;top:170px;width:1px;height:606px;background:#fcfcfc;"></div>
<div class="abs" style="left:796px;top:187.5px;width:2px;height:529px;background:#7c7c7c;"></div>
<div class="abs" style="left:238px;top:784px;width:475px;height:2px;background:#7c7c7c;"></div>
<div class="abs" style="left:605px;top:807px;width:90px;height:23px;background:#fdfdfd;border:1.500px solid #0a67c2;border-radius:4.500px"></div>
<div class="t" style="left:642.40px;top:813.09px;font-size:12px;letter-spacing:-0.800px;">OK</div>
<div class="abs" style="left:703.500px;top:807px;width:89.500px;height:23px;background:#fdfdfd;border:1px solid #d0d0d0;border-bottom-color:#b4b4b4;border-radius:4.500px"></div>
<div class="t" style="left:719.10px;top:813.09px;font-size:12px;letter-spacing:0.029px;">Abbrechen</div>
</body></html>
